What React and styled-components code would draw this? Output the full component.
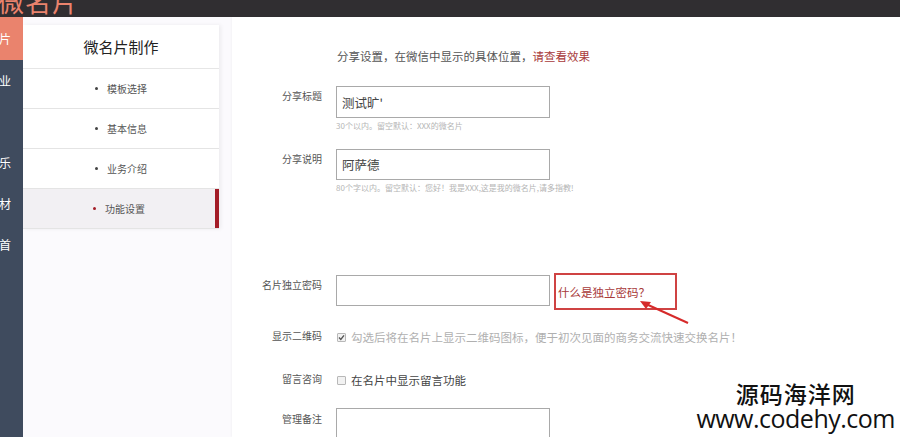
import React from "react"
import styled, { createGlobalStyle } from "styled-components"

const GlobalStyle = createGlobalStyle`
  html, body {
    margin: 0;
    padding: 0;
    background: #fbfafd;
    font-family: "Noto Sans CJK SC", "Noto Sans", sans-serif;
  }
`

const Page = styled.div`
  position: relative;
  width: 900px;
  height: 437px;
  overflow: hidden;
  background: #fbfafd;
`

const TopBar = styled.div`
  height: 17px;
  background: #302e31;
  overflow: hidden;
`

const Brand = styled.div`
  margin-top: -14px;
  margin-left: -2px;
  font-size: 26px;
  line-height: 30px;
  color: #ea836d;
  letter-spacing: 1px;
`

const Body = styled.div`
  display: flex;
  height: 420px;
`

const SideNav = styled.div`
  width: 23px;
  flex-shrink: 0;
  background: #3f4b5e;
`

const SideItem = styled.div`
  height: ${(p) => (p.$first ? "43px" : "41px")};
  display: flex;
  align-items: center;
  justify-content: flex-end;
  overflow: hidden;
  white-space: nowrap;
  padding-right: 12px;
  margin-left: -30px;
  font-size: 12px;
  color: #fff;
  background: ${(p) => (p.$active ? "#ea836d" : "transparent")};
`

const Menu = styled.div`
  width: 196px;
  flex-shrink: 0;
  align-self: flex-start;
  margin-top: 8px;
  background: #fff;
  box-shadow: 2px 0 4px rgba(0, 0, 0, 0.06);
`

const MenuTitle = styled.div`
  height: 43px;
  display: flex;
  align-items: center;
  justify-content: center;
  font-size: 15px;
  color: #222;
  border-bottom: 1px solid #e6e6e6;
`

const MenuItem = styled.div`
  height: 39px;
  display: flex;
  align-items: center;
  justify-content: center;
  gap: 9px;
  font-size: 10px;
  color: #555;
  border-bottom: 1px solid #e4e4e4;
  background: ${(p) => (p.$active ? "#f2f0f3" : "#fff")};
  box-shadow: ${(p) => (p.$active ? "inset -4px 0 0 #a31c27" : "none")};
  padding-right: ${(p) => (p.$active ? "4px" : "0")};

  &::before {
    content: "";
    width: 3px;
    height: 3px;
    border-radius: 50%;
    background: ${(p) => (p.$active ? "#a31c27" : "#444")};
  }
`

const Content = styled.div`
  flex: 1;
  margin-left: 13px;
  background: #fff;
  box-shadow: -1px 0 2px rgba(0, 0, 0, 0.03);
  padding-top: 31px;
`

const Intro = styled.div`
  margin-left: 105px;
  font-size: 11.5px;
  line-height: 16px;
  color: #555;
`

const LinkText = styled.span`
  color: #a83a3a;
`

const Row = styled.div`
  display: flex;
  align-items: flex-start;
  margin-top: ${(p) => p.$mt}px;
`

const Label = styled.div`
  width: 90px;
  flex-shrink: 0;
  text-align: right;
  margin-right: 14px;
  padding-top: ${(p) => p.$pt ?? 3}px;
  font-size: 10px;
  line-height: 14px;
  color: #555;
`

const Field = styled.div`
  display: flex;
  flex-direction: column;
`

const Input = styled.input`
  box-sizing: border-box;
  width: 214px;
  height: ${(p) => p.$h ?? 32}px;
  border: 1px solid #a9a9a9;
  padding: 0 5px;
  font-family: "Noto Sans CJK SC", sans-serif;
  font-size: 12.5px;
  color: #444;
  outline: none;
  background: #fff;
`

const Hint = styled.div`
  margin-top: 2px;
  font-size: 8px;
  line-height: 12px;
  color: #b5b5b5;
  white-space: nowrap;
`

const HelpBox = styled.div`
  box-sizing: border-box;
  margin-left: 4px;
  margin-top: -2px;
  width: 123px;
  height: 37px;
  border: 2px solid #cf4343;
  display: flex;
  align-items: center;
  padding-left: 2px;
  font-size: 11.5px;
  color: #a83a3a;
`

const CheckLine = styled.label`
  display: flex;
  align-items: center;
  gap: 5px;
  padding-top: ${(p) => p.$pt}px;
  padding-left: 1px;
  font-size: ${(p) => p.$size}px;
  line-height: 16px;
  color: ${(p) => p.$color};
  white-space: nowrap;
`

const Box = styled.span`
  box-sizing: border-box;
  width: 9px;
  height: 9px;
  border: 1px solid #b8b8b8;
  border-radius: 1px;
  background: #f2f2f2;
  display: flex;
  align-items: center;
  justify-content: center;
`

const Watermark = styled.div`
  position: absolute;
  right: 5px;
  top: 381px;
  text-align: center;
  font-family: "Noto Sans CJK SC", "Open Sans", sans-serif;
  font-weight: 500;
  color: #111;
`

const WmTitle = styled.div`
  font-size: 23px;
  line-height: 24px;
  letter-spacing: 1px;
`

const WmUrl = styled.div`
  font-family: "Open Sans", sans-serif;
  font-size: 25px;
  line-height: 26px;
  letter-spacing: -0.5px;
`

const Arrow = styled.svg`
  position: absolute;
  left: 634px;
  top: 296px;
`

const CheckBox = ({ checked }) => (
  <Box>
    {checked && (
      <svg width="7" height="7" viewBox="0 0 7 7">
        <path d="M1 3.6 L2.8 5.4 L6 1.4" fill="none" stroke="#555" strokeWidth="1.4" />
      </svg>
    )}
  </Box>
)

const sideItems = ["名片", "企业", "服务", "娱乐", "素材", "首"]
const menuItems = ["模板选择", "基本信息", "业务介绍", "功能设置"]

export default function App() {
  return (
    <Page>
      <GlobalStyle />
      <TopBar>
        <Brand>微名片</Brand>
      </TopBar>
      <Body>
        <SideNav>
          {sideItems.map((s, i) => (
            <SideItem key={i} $first={i === 0} $active={i === 0}>
              {i === 2 ? "" : s}
            </SideItem>
          ))}
        </SideNav>
        <Menu>
          <MenuTitle>微名片制作</MenuTitle>
          {menuItems.map((m, i) => (
            <MenuItem key={m} $active={i === 3}>
              {m}
            </MenuItem>
          ))}
        </Menu>
        <Content>
          <Intro>
            分享设置，在微信中显示的具体位置，<LinkText>请查看效果</LinkText>
          </Intro>
          <Row $mt={22}>
            <Label $pt={3}>分享标题</Label>
            <Field>
              <Input defaultValue="测试旷'" />
              <Hint>30个以内。留空默认：XXX的微名片</Hint>
            </Field>
          </Row>
          <Row $mt={17}>
            <Label $pt={3}>分享说明</Label>
            <Field>
              <Input defaultValue="阿萨德" $h={31} />
              <Hint>80个字以内。留空默认：您好！我是XXX,这是我的微名片,请多指教!</Hint>
            </Field>
          </Row>
          <Row $mt={81}>
            <Label $pt={3}>名片独立密码</Label>
            <Input $h={31} />
            <HelpBox>什么是独立密码？</HelpBox>
          </Row>
          <Row $mt={16}>
            <Label $pt={3}>显示二维码</Label>
            <CheckLine $pt={3} $size={11.5} $color="#b0b0b0">
              <CheckBox checked />
              勾选后将在名片上显示二维码图标，便于初次见面的商务交流快速交换名片！
            </CheckLine>
          </Row>
          <Row $mt={27}>
            <Label $pt={0}>留言咨询</Label>
            <CheckLine $pt={0} $size={11.5} $color="#444">
              <CheckBox />
              在名片中显示留言功能
            </CheckLine>
          </Row>
          <Row $mt={20}>
            <Label $pt={4}>管理备注</Label>
            <Input $h={40} />
          </Row>
        </Content>
      </Body>
      <Arrow width="60" height="32" viewBox="0 0 60 32">
        <path d="M54 27 L12 8" stroke="#d62a2a" strokeWidth="2" fill="none" />
        <path d="M6 5 L17 6 L12 13 Z" fill="#d62a2a" />
      </Arrow>
      <Watermark>
        <WmTitle>源码海洋网</WmTitle>
        <WmUrl>www.codehy.com</WmUrl>
      </Watermark>
    </Page>
  )
}
